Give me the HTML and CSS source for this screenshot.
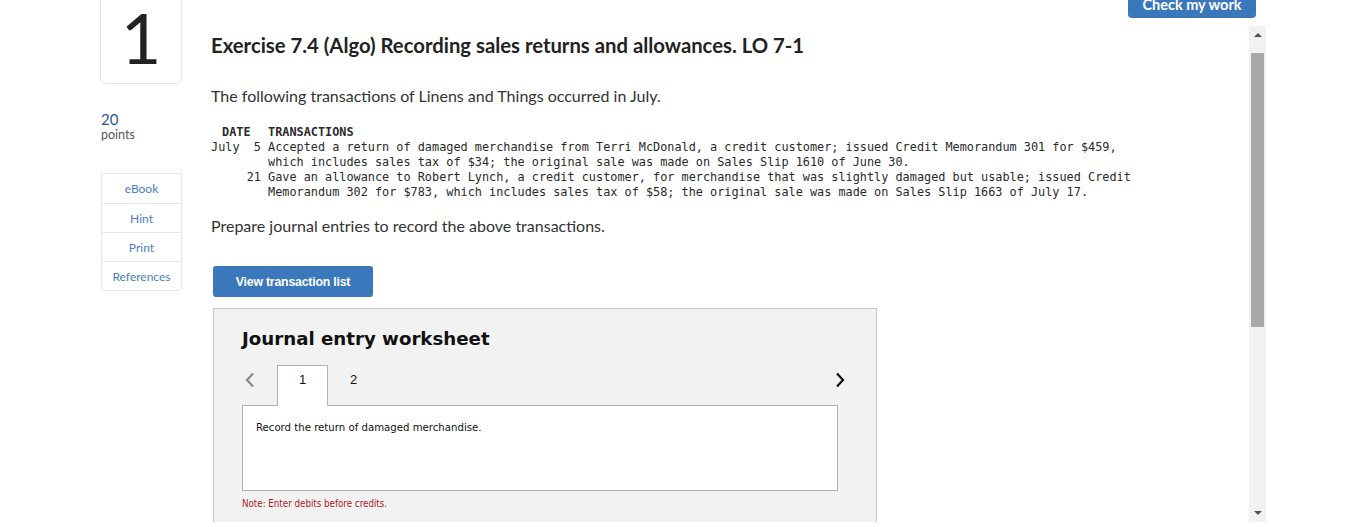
FILE: index.html
```html
<!DOCTYPE html>
<html>
<head>
<meta charset="utf-8">
<link rel="stylesheet" href="styles.css">
</head>
<body>
<div class="page">
  <aside class="left">
    <div class="qnum">1</div>
    <div class="points">
      <div class="pts-val">20</div>
      <div class="pts-lbl">points</div>
    </div>
    <ul class="tools">
      <li>eBook</li>
      <li>Hint</li>
      <li>Print</li>
      <li>References</li>
    </ul>
  </aside>
  <div class="right">
    <div class="topbar">
      <button class="check">Check my work</button>
    </div>
    <div class="frame">
      <main class="content">
        <h1 class="title">Exercise 7.4 (Algo) Recording sales returns and allowances. LO 7-1</h1>
        <p class="intro">The following transactions of Linens and Things occurred in July.</p>
        <div class="trans">
          <div class="trow head"><span class="tdate"><b class="hdate">DATE</b></span><b class="ttext">TRANSACTIONS</b></div>
          <div class="trow"><span class="tdate">July  5</span><span class="ttext">Accepted a return of damaged merchandise from Terri McDonald, a credit customer; issued Credit Memorandum 301 for $459,
which includes sales tax of $34; the original sale was made on Sales Slip 1610 of June 30.</span></div>
          <div class="trow"><span class="tdate">     21</span><span class="ttext">Gave an allowance to Robert Lynch, a credit customer, for merchandise that was slightly damaged but usable; issued Credit
Memorandum 302 for $783, which includes sales tax of $58; the original sale was made on Sales Slip 1663 of July 17.</span></div>
        </div>
        <p class="intro prep">Prepare journal entries to record the above transactions.</p>
        <button class="viewlist">View transaction list</button>
        <section class="worksheet">
          <h2 class="ws-title">Journal entry worksheet</h2>
          <div class="tabs">
            <span class="nav prev"><svg width="10" height="16" viewBox="0 0 10 16"><polyline points="8,1.5 2,8 8,14.5" fill="none" stroke="#8a8a8a" stroke-width="2.2"/></svg></span>
            <span class="tab active">1</span>
            <span class="tab">2</span>
            <span class="spacer"></span>
            <span class="nav next"><svg width="10" height="16" viewBox="0 0 10 16"><polyline points="2,1.5 8,8 2,14.5" fill="none" stroke="#111" stroke-width="2.2"/></svg></span>
          </div>
          <div class="ws-box">Record the return of damaged merchandise.</div>
          <p class="note">Note: Enter debits before credits.</p>
        </section>
      </main>
      <div class="scrollbar">
        <span class="arrow up"></span>
        <span class="thumb"></span>
        <span class="track"></span>
        <span class="arrow down"></span>
      </div>
    </div>
  </div>
</div>
</body>
</html>
```
FILE: styles.css
```css
* { box-sizing: border-box; }
html, body { margin: 0; padding: 0; background: #fff; }
body { font-family: Lato, "Open Sans", sans-serif; color: #333; overflow: hidden; height: 527px; }

.page { display: flex; align-items: flex-start; }

.left { width: 82px; margin-left: 100px; margin-top: -10px; display: flex; flex-direction: column; }
.qnum {
  height: 94px; border: 1px solid #e6e6e6; border-radius: 0 0 5px 5px;
  display: flex; align-items: center; justify-content: center;
  font-size: 70px; line-height: 1; font-weight: 400; color: #222; padding-top: 0;
}
.points { margin-top: 27px; padding-left: 1px; }
.pts-val { font-size: 15px; color: #1e5a9c; line-height: 16px; }
.pts-lbl { font-size: 12.5px; color: #555; line-height: 15px; }
.tools {
  list-style: none; margin: 31px 0 0 1px; padding: 0; width: 81px;
  border: 1px solid #e6e6e6; border-radius: 0 0 4px 4px;
}
.tools li {
  height: 29px; display: flex; align-items: center; justify-content: center;
  font-size: 12px; color: #4b7ec0; border-top: 1px solid #e6e6e6;
}
.tools li:first-child { border-top: 0; }

.right { margin-left: 18px; display: flex; flex-direction: column; width: 1066px; flex: none; }
.topbar { height: 26px; display: flex; justify-content: flex-end; padding-right: 10px; }
.check {
  margin-top: -15px; height: 33px; width: 128px; border: 0; border-radius: 0 0 4px 4px;
  background: #3a77bb; color: #fff; font-family: Lato, sans-serif; font-weight: 700; font-size: 14.5px;
  padding-top: 7px;
}

.frame { height: 496px; display: flex; overflow: hidden; }
.content { flex: 1; padding: 6px 0 0 11px; overflow: hidden; }

.title { margin: 0; font-size: 20.3px; font-weight: 700; color: #222; line-height: 26px; }
.intro { margin: 28px 0 0; font-size: 16px; line-height: 20px; color: #333; }

.trans {
  margin-top: 19px; font-family: "DejaVu Sans Mono", "Liberation Mono", monospace;
  font-size: 11.85px; line-height: 15px; color: #2a2a2a;
}
.trow { display: flex; }
.tdate { width: 57px; flex: none; white-space: pre; }
.ttext { white-space: pre; }
.hdate { padding-left: 11px; }

.prep { margin-top: 16px; }

.viewlist {
  display: block; margin: 30px 0 0 2px; width: 160px; height: 31px; border: 0; border-radius: 3px;
  background: #3a77bb; color: #fff; font-family: "Liberation Sans", Arial, sans-serif;
  font-weight: 700; font-size: 12.3px; letter-spacing: -0.2px;
}

.worksheet {
  margin: 11px 0 0 2px; width: 664px; height: 230px; background: #f2f2f2;
  border: 1px solid #c8c8c8; padding: 19px 0 0 28px;
  font-family: "DejaVu Sans", Verdana, sans-serif;
}
.ws-title { margin: 0; font-size: 18.2px; font-weight: 700; color: #111; line-height: 22px; }
.tabs { display: flex; align-items: flex-start; margin-top: 15px; width: 596px; height: 40px; }
.nav { height: 30px; display: flex; align-items: center; }
.prev { width: 35px; padding-left: 3px; }
.tab {
  width: 51px; height: 40px; display: flex; align-items: flex-start; justify-content: center;
  font-family: "Liberation Sans", Arial, sans-serif; font-size: 13px; color: #111; padding-top: 7px;
}
.tab.active { background: #fff; border: 1px solid #b3b3b3; border-bottom: 0; position: relative; height: 41px; padding-top: 6px; z-index: 1; }
.spacer { flex: 1; }
.next { width: 12px; margin-right: -9px; }
.ws-box {
  width: 596px; height: 86px; background: #fff; border: 1px solid #b3b3b3;
  padding: 15px 0 0 13px; font-family: "DejaVu Sans Condensed", "DejaVu Sans", sans-serif; font-stretch: condensed; font-size: 11.3px; color: #111;
}
.note { margin: 7px 0 0; font-family: "DejaVu Sans Condensed", "DejaVu Sans", sans-serif; font-stretch: condensed; font-size: 9.7px; color: #b0172a; }

.scrollbar { width: 17px; flex: none; background: #f1f1f1; display: flex; flex-direction: column; align-items: center; }
.arrow { width: 0; height: 0; border-left: 4px solid transparent; border-right: 4px solid transparent; flex: none; }
.arrow.up { border-bottom: 4px solid #505050; margin: 7px 0 16px; }
.arrow.down { border-top: 4px solid #505050; margin: 6px 0 7px; }
.thumb { width: 13px; height: 274px; background: #a8a8a8; flex: none; }
.track { flex: 1; }
```
